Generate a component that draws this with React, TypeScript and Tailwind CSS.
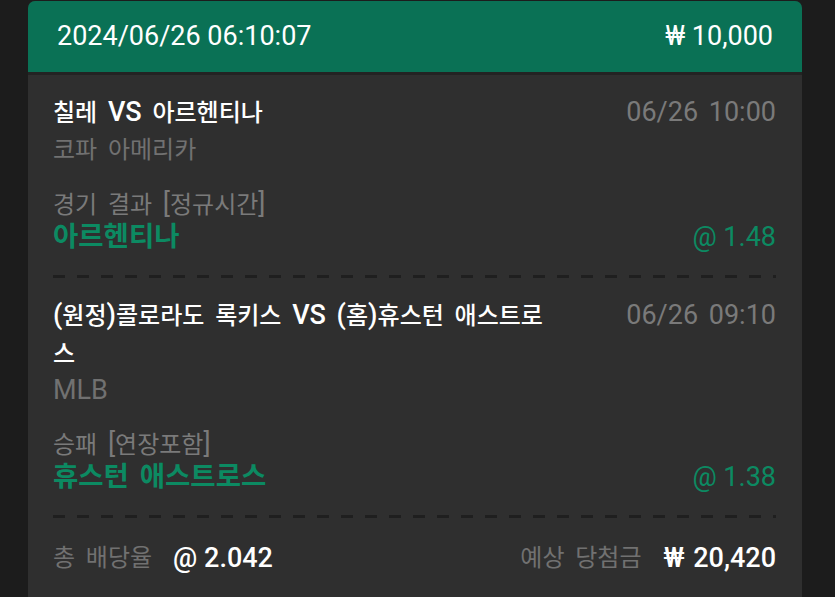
import React from "react";

type Bet = {
  title: string;
  league: string;
  time: string;
  market: string;
  pick: string;
  odds: string;
};

const BETS: Bet[] = [
  {
    title: "칠레 VS 아르헨티나",
    league: "코파 아메리카",
    time: "06/26 10:00",
    market: "경기 결과 [정규시간]",
    pick: "아르헨티나",
    odds: "@ 1.48",
  },
  {
    title: "(원정)콜로라도 록키스 VS (홈)휴스턴 애스트로스",
    league: "MLB",
    time: "06/26 09:10",
    market: "승패 [연장포함]",
    pick: "휴스턴 애스트로스",
    odds: "@ 1.38",
  },
];

// Hangul glyphs sit a bit smaller next to the Latin text in the original font
function Txt({ children }: { children: string }) {
  const parts = children.split(/([\uAC00-\uD7A3]+)/);
  return (
    <>
      {parts.map((part, i) =>
        /[\uAC00-\uD7A3]/.test(part) ? (
          <span key={i} className="text-[0.89em]">
            {part}
          </span>
        ) : (
          <React.Fragment key={i}>{part}</React.Fragment>
        )
      )}
    </>
  );
}

function Dashes() {
  return (
    <div className="h-[3px] w-full bg-[repeating-linear-gradient(to_right,#1f1f1f_0_12px,transparent_12px_24px)]" />
  );
}

function BetRow({ bet }: { bet: Bet }) {
  return (
    <div className="pt-[19px] pb-[22px]">
      <div className="flex items-start justify-between">
        <div className="w-[500px]">
          <p className="leading-[37px] font-medium text-white">
            <Txt>{bet.title}</Txt>
          </p>
          <p className="leading-[34px] text-[#717171]">
            <Txt>{bet.league}</Txt>
          </p>
        </div>
        <span className="leading-[37px] text-[#7a7a7a]">{bet.time}</span>
      </div>
      <p className="mt-[21px] leading-[32px] text-[#7a7a7a]">
        <Txt>{bet.market}</Txt>
      </p>
      <div className="flex items-center justify-between">
        <span className="text-[27.5px] leading-[32px] font-semibold text-[#0c8a62]">{bet.pick}</span>
        <span className="leading-[32px] text-[#0c8a62] [word-spacing:0]">{bet.odds}</span>
      </div>
    </div>
  );
}

export default function App() {
  return (
    <div
      className="min-h-screen bg-[#1c1c1c] pt-px text-[27px] [word-spacing:4px]"
      style={{ fontFamily: 'Roboto, "Noto Sans CJK KR", sans-serif' }}
    >
      <div className="ml-[28px] h-[596px] w-[774px] overflow-hidden rounded-t-[7px] bg-[#2f2f2f]">
        <div className="flex h-[74px] items-center justify-between border-b-[3px] border-[#232323] bg-[#0a7155] px-[29px] text-white [word-spacing:0]">
          <span>2024/06/26 06:10:07</span>
          <span>₩ 10,000</span>
        </div>
        <div className="pl-[25px] pr-[26px]">
          {BETS.map((bet, i) => (
            <div key={i}>
              <BetRow bet={bet} />
              <Dashes />
            </div>
          ))}
          <div className="flex items-center justify-between pt-[21px] leading-[36px]">
            <div className="flex items-center gap-[21px]">
              <span className="text-[#717171]">
                <Txt>총 배당율</Txt>
              </span>
              <span className="font-medium text-white [word-spacing:0]">@ 2.042</span>
            </div>
            <div className="flex items-center gap-[22px]">
              <span className="text-[#717171]">
                <Txt>예상 당첨금</Txt>
              </span>
              <span className="font-medium text-white [word-spacing:2px]">₩ 20,420</span>
            </div>
          </div>
        </div>
      </div>
    </div>
  );
}
